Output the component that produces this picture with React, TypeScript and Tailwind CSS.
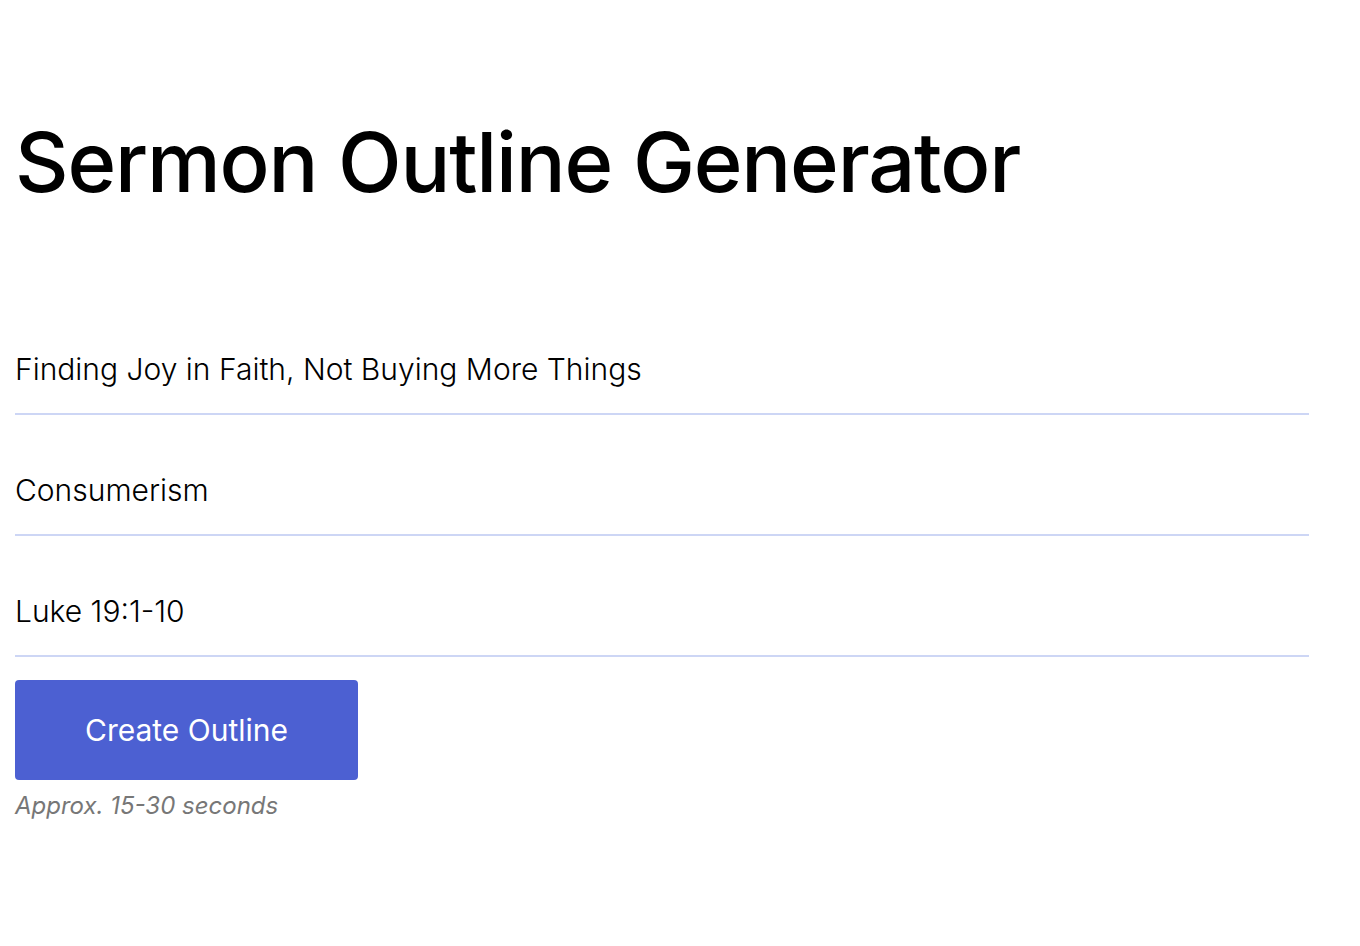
import { useState } from 'react';

const FIELDS = [
  { name: 'title', value: 'Finding Joy in Faith, Not Buying More Things' },
  { name: 'topic', value: 'Consumerism' },
  { name: 'passage', value: 'Luke 19:1-10' },
];

export default function App() {
  const [values, setValues] = useState<Record<string, string>>(
    Object.fromEntries(FIELDS.map((f) => [f.name, f.value]))
  );

  return (
    <div className="min-h-screen bg-white px-[15px] text-black" style={{ fontFamily: 'Inter, "Noto Sans", sans-serif' }}>
      <h1 className="pt-[121px] text-[83px] font-medium leading-none tracking-[-1.2px]">
        Sermon Outline Generator
      </h1>

      <form className="mt-[125px] flex w-[1294px] flex-col gap-[35px]" onSubmit={(e) => e.preventDefault()}>
        {FIELDS.map((f) => (
          <input
            key={f.name}
            name={f.name}
            value={values[f.name]}
            onChange={(e) => setValues((v) => ({ ...v, [f.name]: e.target.value }))}
            className="h-[86px] w-full border-b-2 border-[#cdd6f5] bg-transparent px-0 pb-[5px] text-[30px] font-[300] text-black outline-none"
          />
        ))}
      </form>

      <button
        type="button"
        className="mt-[23px] h-[100px] w-[343px] rounded-[4px] bg-[#4c60d2] text-[30px] font-normal text-white"
      >
        Create Outline
      </button>
      <p className="mt-[14px] text-[24px] italic leading-none text-[#777777]">Approx. 15-30 seconds</p>
    </div>
  );
}
